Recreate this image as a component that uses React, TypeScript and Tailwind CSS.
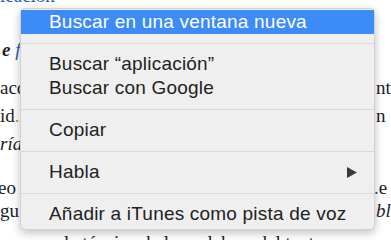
import React from 'react';

type Item = { label: string; active?: boolean; submenu?: boolean } | 'sep';

const items: Item[] = [
  { label: 'Buscar en una ventana nueva', active: true },
  'sep',
  { label: 'Buscar \u201caplicación\u201d' },
  { label: 'Buscar con Google' },
  'sep',
  { label: 'Copiar' },
  'sep',
  { label: 'Habla', submenu: true },
  'sep',
  { label: 'Añadir a iTunes como pista de voz' },
];

// page text that peeks out on both sides of the menu
const PageText: React.FC = () => (
  <div className="font-['Liberation_Serif','Times_New_Roman',serif] text-[19px] text-[#1c1c26] whitespace-nowrap">
    <div className="-mt-[15px] h-[22px] leading-[22px] text-[#2a5db0]">lcación</div>
    <div className="mt-[32px] h-[22px] leading-[22px] pl-[2px]">
      <span className="font-bold italic">e </span>
      <span className="italic text-[#2a5db0]">fuentes</span>
    </div>
    <div className="mt-[13px] grid grid-cols-[376px_1fr] h-[28px] leading-[28px]">
      <span className="overflow-hidden">acceso</span>
      <span>ntos</span>
    </div>
    <div className="grid grid-cols-[376px_1fr] h-[28px] leading-[28px]">
      <span className="overflow-hidden">id<span className="text-[#e08a2c]">.</span></span>
      <span>n</span>
    </div>
    <div className="grid grid-cols-[376px_1fr] h-[28px] leading-[28px]">
      <span className="overflow-hidden italic">ría</span>
      <span />
    </div>
    <div className="mt-[18px] grid grid-cols-[374px_1fr] h-[23px] leading-[23px]">
      <span className="overflow-hidden -ml-[2px]">eo</span>
      <span>
        <span className="text-[#2a5db0]">.</span>e
      </span>
    </div>
    <div className="grid grid-cols-[376px_1fr] h-[23px] leading-[23px]">
      <span className="overflow-hidden">gu</span>
      <span className="italic">bla</span>
    </div>
    <div className="mt-[9px] h-[23px] leading-[23px] pl-[64px]">la técnica de las palabras del texto</div>
  </div>
);

const ContextMenu: React.FC = () => (
  <div className="absolute left-[20px] top-[8px] w-[355px] rounded-[5px] border border-[#d2d2d2] bg-[#efefef] pt-[1px] pb-[3px] shadow-[0_3px_10px_rgba(0,0,0,0.25)] font-['Liberation_Sans',Arial,sans-serif] text-[19px] tracking-[0.2px] text-[#222222]">
    {items.map((it, i) =>
      it === 'sep' ? (
        <div key={i} className="h-[18px] flex items-center">
          <div className="h-px w-full bg-[#d9d9d9]" />
        </div>
      ) : (
        <div
          key={i}
          className={`h-[24px] flex items-center justify-between pl-[28px] pr-[17px] leading-[24px] ${
            it.active ? 'bg-[#3d8bf6] text-white' : ''
          }`}
        >
          <span>{it.label}</span>
          {it.submenu && (
            <svg width="10" height="11" viewBox="0 0 10 11">
              <path d="M0 0 L10 5.5 L0 11 Z" fill="#3a3a3a" />
            </svg>
          )}
        </div>
      )
    )}
  </div>
);

export default function App() {
  return (
    <div className="relative w-[391px] h-[240px] overflow-hidden bg-white">
      <PageText />
      <ContextMenu />
    </div>
  );
}
